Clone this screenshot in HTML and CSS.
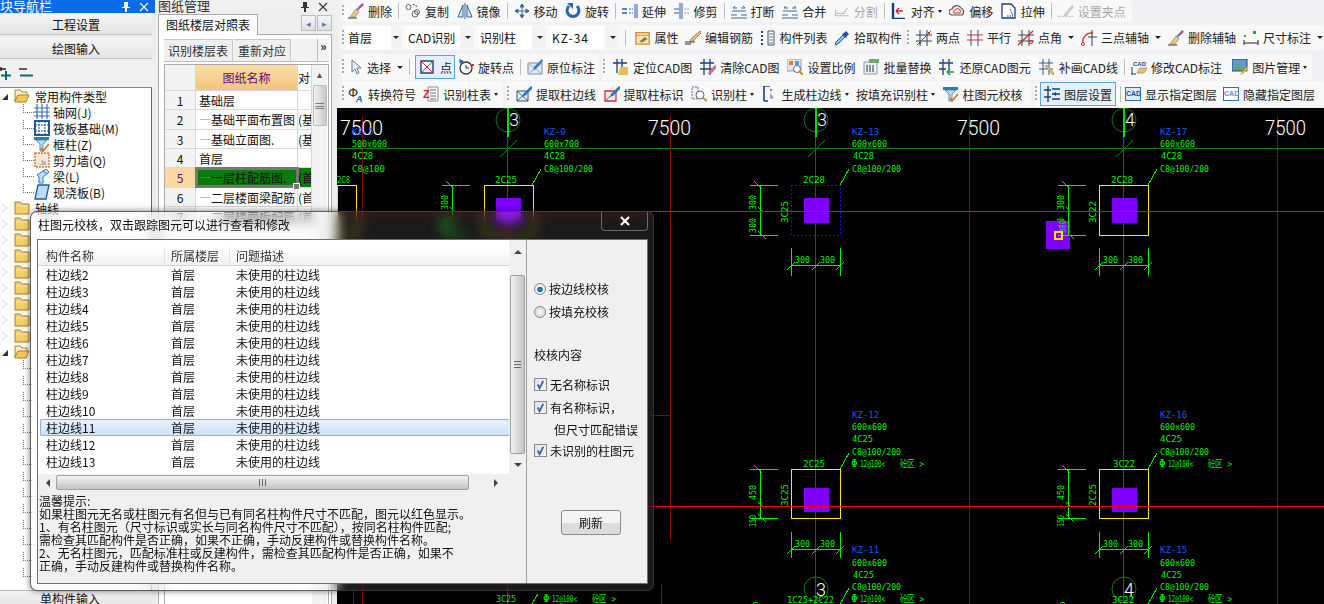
FILE: index.html
```html
<!DOCTYPE html>
<html lang="zh-CN">
<head>
    <meta charset="UTF-8">
    <title>柱图元校核</title>
    <link rel="stylesheet" href="styles.css">
</head>
<body>
    <svg class="sprite" aria-hidden="true">
        <symbol id="i-broom" viewBox="0 0 16 16"><path d="M0 15h9" stroke="#333"/><path d="M15 1L8 8" stroke="#6b7fb8" stroke-width="2.4"/><path d="M8 6l3 3-4 5H2z" fill="#e4c98e" stroke="#8a7444" stroke-width=".6"/><path d="M15 1l-3 3" stroke="#c04a7a" stroke-width="2"/></symbol>
        <symbol id="i-copy" viewBox="0 0 16 16"><g fill="none" stroke="#666"><circle cx="3.5" cy="4" r="2.5"/><circle cx="10" cy="11" r="3"/><circle cx="12" cy="9" r="2.5"/></g><path d="M8 1l5 3" stroke="#345" stroke-dasharray="2 1"/></symbol>
        <symbol id="i-mirror" viewBox="0 0 16 16"><path d="M6 2v12H1zM10 2v12h5z" fill="#dbe6f5" stroke="#33629c"/><path d="M8 0v16" stroke="#33629c"/></symbol>
        <symbol id="i-move" viewBox="0 0 16 16"><path d="M8 1v14M1 8h14M8 1L6 4h4zM8 15l-2-3h4zM1 8l3-2v4zM15 8l-3-2v4z" stroke="#3a6a9e" fill="#3a6a9e"/></symbol>
        <symbol id="i-rotate" viewBox="0 0 16 16"><path d="M4 3a6 6 0 1 0 8 0" fill="none" stroke="#2a62b8" stroke-width="3"/><path d="M2 0h6v6z" fill="#2a62b8"/></symbol>
        <symbol id="i-extend" viewBox="0 0 16 16"><path d="M13 1v14M15 1v14" stroke="#2a5ea8"/><path d="M0 6h5M0 10h5" stroke="#2a5ea8" stroke-width="1.4"/><path d="M7 6h4M7 10h4" stroke="#2a5ea8" stroke-dasharray="2 1"/></symbol>
        <symbol id="i-trim" viewBox="0 0 16 16"><path d="M6 0v16M8 0v16" stroke="#2a5ea8"/><path d="M0 6h5M0 10h5" stroke="#2a5ea8"/><path d="M10 6h6M10 10h6" stroke="#8aa" stroke-dasharray="2 1"/></symbol>
        <symbol id="i-break" viewBox="0 0 16 16"><path d="M0 12h6M10 12h6M0 15h16" stroke="#3a6a9e" stroke-width="1.2"/><path d="M2 5h4M2 5l2-2M14 5h-4M14 5l-2-2M1 8h14" stroke="#3a6a9e"/></symbol>
        <symbol id="i-split" viewBox="0 0 20 16"><path d="M1 14h17M2 11h10l5-7M2 14V6" fill="none" stroke="#bbb" stroke-width="1.3"/></symbol>
        <symbol id="i-align" viewBox="0 0 16 16"><path d="M2 0v16h12" fill="none" stroke="#123f86" stroke-width="2.4"/><path d="M12 8H5M5 8l3-3M5 8l3 3" fill="none" stroke="#d22" stroke-width="1.4"/></symbol>
        <symbol id="i-offset" viewBox="0 0 16 16"><path d="M3 12a3 3 0 0 1 0-6 5 5 0 0 1 9-1 4 4 0 0 1 1 7z" fill="#f7e9e4" stroke="#555" stroke-width="1.2"/><path d="M5 10a2 2 0 0 1 1-3 3 3 0 0 1 5 0 2 2 0 0 1 0 3z" fill="none" stroke="#d33"/></symbol>
        <symbol id="i-stretch" viewBox="0 0 16 16"><path d="M1 1h9l4 4v10H1z" fill="#fff" stroke="#1d3f7c" stroke-width="1.3"/><path d="M9 6l3 7M6 13h6" stroke="#1d3f7c" stroke-dasharray="1.5 1"/></symbol>
        <symbol id="i-grip" viewBox="0 0 18 16"><path d="M0 14h18" stroke="#bbb" stroke-dasharray="3 1"/><path d="M16 1l-6 7 2 2 6-6z" fill="#ccc"/><path d="M9 9l3 2-2 2H7z" fill="#ddd" stroke="#bbb"/></symbol>
        <symbol id="i-prop" viewBox="0 0 18 16"><path d="M1 2h15v13H1z" fill="#f6e6b8" stroke="#d88a2a" stroke-width="1.4"/><path d="M1 5h15" stroke="#d88a2a"/><path d="M5 12l6-5 3 2-6 4z" fill="#8a7444"/></symbol>
        <symbol id="i-rebar" viewBox="0 0 16 16"><path d="M0 12h10M0 14h6" stroke="#333"/><path d="M15 1l-9 8-1 3 3-1 8-8z" fill="#e7c27a" stroke="#7a5a20" stroke-width=".7"/></symbol>
        <symbol id="i-list" viewBox="0 0 16 16"><path d="M8 1h6v14H8z" fill="#fff" stroke="#456"/><path d="M9 4h4M9 7h4M9 10h4M9 13h4" stroke="#678"/><path d="M1 2h3M1 6h3M1 10h3M1 14h3" stroke="#345" stroke-width="2" stroke-dasharray="2 1"/></symbol>
        <symbol id="i-pick" viewBox="0 0 16 16"><path d="M9 5l2 2-7 7-3 1 1-3z" fill="#8ec1ee" stroke="#2a62a8"/><path d="M8 4l4 4 1-2 2-2-3-3-2 2z" fill="#1f56a6"/></symbol>
        <symbol id="i-2pt" viewBox="0 0 16 16"><path d="M4 0v16M11 0v16M0 5h16M0 11h16" stroke="#345"/><path d="M1 15L15 1" stroke="#2a7a2a"/><path d="M3 12h2v2H3zM12 2h2v2h-2z" fill="#d22"/></symbol>
        <symbol id="i-para" viewBox="0 0 16 16"><path d="M4 0v16M11 0v16" stroke="#33558c"/><path d="M0 5h16M0 10h16" stroke="#c33"/></symbol>
        <symbol id="i-angle" viewBox="0 0 16 16"><path d="M4 0v16M11 0v16M0 5h16M0 11h16" stroke="#345"/><path d="M0 15L15 1" stroke="#d22" stroke-width="1.3"/><circle cx="13" cy="12" r="1.6" fill="none" stroke="#d22"/></symbol>
        <symbol id="i-arc" viewBox="0 0 16 16"><path d="M2 14A9 9 0 0 1 12 3" fill="none" stroke="#d22" stroke-width="1.3"/><path d="M11 0v16M7 7h9" stroke="#345"/><circle cx="2" cy="14" r="1.5" fill="#fff" stroke="#d22"/></symbol>
        <symbol id="i-dim" viewBox="0 0 16 16"><path d="M1 10v5M15 10v5M1 13h14" stroke="#222"/><path d="M1 5h2v2H1zM10 1h3v3h-3z" fill="#2aa52a"/></symbol>
        <symbol id="i-cursor" viewBox="0 0 16 16"><path d="M5 1v12l3-3 2 5 2-1-2-5h4z" fill="#eef2fa" stroke="#66748e"/></symbol>
        <symbol id="i-point" viewBox="0 0 16 16"><path d="M2 2h12v12H2z" fill="#fff" stroke="#1d3f7c" stroke-width="1.4"/><path d="M2 2l12 12M14 2L2 14" stroke="#d22"/></symbol>
        <symbol id="i-rotpt" viewBox="0 0 16 16"><circle cx="8" cy="9" r="6" fill="none" stroke="#333" stroke-width="1.3"/><path d="M8 9V6M8 9h3" stroke="#333"/><path d="M1 0l5 2-4 3z" fill="#2a62b8"/><circle cx="15" cy="6" r="1.2" fill="#d22"/></symbol>
        <symbol id="i-mark" viewBox="0 0 16 16"><path d="M1 4h14v11H1z" fill="#dfe8f4" stroke="#7b8fa8"/><path d="M1 4l14 11M15 4L1 15" stroke="#a5b5c8"/><path d="M15 0L7 8l-1 3 3-1 7-8z" fill="#3a78c8"/></symbol>
        <symbol id="i-locate" viewBox="0 0 16 16"><path d="M4 0v14M9 0v14M0 4h14" stroke="#1d3f7c" stroke-width="1.3"/><path d="M7 8h8v8H5z" fill="#e8bc5a"/></symbol>
        <symbol id="i-clear" viewBox="0 0 16 16"><path d="M4 0v16M10 0v16M0 4h14M0 10h14" stroke="#1d3f7c" stroke-width="1.3"/><path d="M15 6l-6 6-1 3 4-1 5-6z" fill="#d36a8a"/></symbol>
        <symbol id="i-scale" viewBox="0 0 16 16"><path d="M0 0h14v12H0z" fill="#dfe9f6" stroke="#8aa2c0"/><path d="M2 2h4v4H2z" fill="#e67a3a"/><path d="M8 2h4v4H8z" fill="#5a9ad6"/><circle cx="10" cy="10" r="3.5" fill="#fff" stroke="#667"/><path d="M12 12l4 4" stroke="#c09030" stroke-width="2"/></symbol>
        <symbol id="i-batch" viewBox="0 0 16 16"><path d="M1 3h13v12H1z" fill="#eef0f3" stroke="#8b97a6"/><path d="M4 6v7M7 6v7M10 6v7" stroke="#456" stroke-width="1.2"/><path d="M6 0h10v4H6z" fill="#6ea86e"/></symbol>
        <symbol id="i-restore" viewBox="0 0 16 16"><path d="M4 0v16M10 0v12M0 4h14M0 10h7" stroke="#1d3f7c" stroke-width="1.3"/><path d="M15 13H8M8 13l3-3M8 13l3 3" fill="none" stroke="#2a9a3a" stroke-width="1.6"/></symbol>
        <symbol id="i-draw" viewBox="0 0 16 16"><path d="M4 0v16M10 0v16M0 4h14M0 10h14" stroke="#345a8c"/><path d="M6 7l2-1 7 8-1 2z" fill="#e7c27a" stroke="#8a7444" stroke-width=".6"/></symbol>
        <symbol id="i-pic" viewBox="0 0 16 16"><path d="M0 0h15v12H0z" fill="#5d9bd8" stroke="#345"/><path d="M1 11l5-6 4 4 2-2 2 4z" fill="#6aa84f"/><path d="M16 7l-7 7-1 2 3-1 7-7z" fill="#e7b23a"/></symbol>
        <symbol id="i-ztable" viewBox="0 0 16 16"><path d="M5 1h10v14H5z" fill="#fff" stroke="#889"/><path d="M7 4h6M7 7h6M7 10h6M7 13h6" stroke="#667"/></symbol>
        <symbol id="i-extract" viewBox="0 0 16 16"><path d="M1 5h11v10H1z" fill="#e9eff7" stroke="#2a4f88"/><path d="M1 5l11 10M12 5L1 15" stroke="#2a7a3a"/><path d="M15 0l-8 8-1 3 3-1 8-8z" fill="#2a78c8"/></symbol>
        <symbol id="i-extred" viewBox="0 0 16 16"><path d="M1 5h11v10H1z" fill="#f7e9e9" stroke="#c33" stroke-width="1.3"/><path d="M1 15L12 5" stroke="#2a7a3a"/><path d="M15 0l-8 8-1 3 3-1 8-8z" fill="#2a78c8"/></symbol>
        <symbol id="i-recog" viewBox="0 0 16 16"><path d="M1 1h6v12H1z" fill="#eef1f5" stroke="#678" stroke-dasharray="2 1"/><circle cx="9" cy="9" r="4" fill="#fff" stroke="#667"/><path d="M12 12l4 3" stroke="#c09030" stroke-width="2"/></symbol>
        <symbol id="i-gen" viewBox="0 0 16 16"><path d="M2 0v15M2 0h6M2 15h4" fill="none" stroke="#1d3f7c" stroke-width="1.6"/><path d="M8 7l4 5-3 1-1-1z" fill="#8aa8c8"/><circle cx="9" cy="4" r="1" fill="#d22"/></symbol>
        <symbol id="i-column" viewBox="0 0 16 16"><path d="M0 1h15v3H0z" fill="#2d7ac0"/><path d="M2 4h11L9 8v7H6V8z" fill="#bcdcf4" stroke="#2d7ac0" stroke-width=".8"/><path d="M7 12l2 3 6-7" fill="none" stroke="#d8742a" stroke-width="1.8"/></symbol>
        <symbol id="i-layer" viewBox="0 0 16 16"><path d="M4 0v16M0 4h7M0 11h7" stroke="#123f86" stroke-width="1.4"/><path d="M8 3h8M8 8h8M8 13h8" stroke="#123f86" stroke-width="1.3"/><path d="M9 8l3-2v4z" fill="#123f86"/></symbol>
        <symbol id="i-wall" viewBox="0 0 16 16"><path d="M1 1h14v14H1z" fill="#f3e7dc" stroke="#d8742a" stroke-dasharray="2 1" stroke-width="1.4"/><path d="M4 13l8-3v3zM7 8l5 2-4 1z" fill="#b5a99c"/></symbol>
        <symbol id="i-beam" viewBox="0 0 16 16"><path d="M3 7l9-6 3 3-6 5v6H5V9z" fill="#bcdcf4" stroke="#2d7ac0"/><path d="M9 3l4 3" stroke="#2d7ac0"/></symbol>
        <symbol id="i-slab" viewBox="0 0 16 16"><path d="M4 1h11l-3 14H1z" fill="#bcdcf4" stroke="#1d5aa0" stroke-width="1.3"/></symbol>
        <symbol id="i-net" viewBox="0 0 16 16"><path d="M3 0v15M8 0v15M13 0v15M0 4h16M0 8h16M0 12h16" stroke="#3d6eb4" stroke-width="1.2"/></symbol>
        <symbol id="i-raft" viewBox="0 0 16 16"><path d="M1 1h14v14H1z" fill="#fff" stroke="#1d5aa0" stroke-width="2"/><path d="M5 1v14M11 1v14M1 5h14M1 11h14" stroke="#1d5aa0" stroke-dasharray="2 1"/></symbol>
        <symbol id="i-folder" viewBox="0 0 16 14"><path d="M1 3V1h5l2 2h7v10H1z" fill="#f4cf6a" stroke="#a3802c"/><path d="M2 5h12" stroke="#fbeeb8"/></symbol>
        <symbol id="i-open" viewBox="0 0 16 14"><path d="M1 12V1h5l2 2h5v3" fill="#fff2c4" stroke="#a3802c"/><path d="M1 12l3-6h11l-3 7H1z" fill="#f4c95a" stroke="#a3802c"/></symbol>
        <symbol id="i-pin" viewBox="0 0 10 10"><path d="M3 0h4v5h2v1H6v4H4V6H1V5h2z" fill="currentColor"/></symbol>
        <symbol id="i-x" viewBox="0 0 10 10"><path d="M1 1l8 8M9 1L1 9" stroke="currentColor" stroke-width="1.1"/></symbol>
        <symbol id="i-check" viewBox="0 0 12 12"><path d="M3 6l2 4 4-8" fill="none" stroke="#3f5ea8" stroke-width="2"/></symbol>
    </svg>

    <div class="app">
        <aside class="nav-panel">
            <div class="dock-title dock-title-active">
                <span>块导航栏</span>
                <svg class="dock-ic"><use href="#i-pin"/></svg>
                <svg class="dock-ic"><use href="#i-x"/></svg>
            </div>
            <div class="nav-btn">工程设置</div>
            <div class="nav-btn">绘图输入</div>
            <div class="tree-tools">
                <svg class="expand-ic" viewBox="0 0 34 13"><path d="M0 2h6M1 0v4" stroke="#222" stroke-width="1.4"/><path d="M1 8.500h10M6 4v9" stroke="#0c6a6a" stroke-width="2"/><path d="M19 2h8" stroke="#222" stroke-width="1.4"/><path d="M20 8.500h13" stroke="#0c6a6a" stroke-width="2"/></svg>
            </div>
            <ul class="tree">
                <li class="node"><i class="tw tw-open"></i><svg class="folder"><use href="#i-open"/></svg><span>常用构件类型</span></li>
                <li class="leaf"><svg class="ic"><use href="#i-net"/></svg><span>轴网(J)</span></li>
                <li class="leaf"><svg class="ic"><use href="#i-raft"/></svg><span>筏板基础(M)</span></li>
                <li class="leaf"><svg class="ic"><use href="#i-column"/></svg><span>框柱(Z)</span></li>
                <li class="leaf"><svg class="ic"><use href="#i-wall"/></svg><span>剪力墙(Q)</span></li>
                <li class="leaf"><svg class="ic"><use href="#i-beam"/></svg><span>梁(L)</span></li>
                <li class="leaf"><svg class="ic"><use href="#i-slab"/></svg><span>现浇板(B)</span></li>
                <li class="node"><i class="tw"></i><svg class="folder"><use href="#i-folder"/></svg><span>轴线</span></li>
                <li class="node"><i class="tw"></i><svg class="folder"><use href="#i-folder"/></svg></li>
                <li class="node"><i class="tw"></i><svg class="folder"><use href="#i-folder"/></svg></li>
                <li class="node"><i class="tw"></i><svg class="folder"><use href="#i-folder"/></svg></li>
                <li class="node"><i class="tw"></i><svg class="folder"><use href="#i-folder"/></svg></li>
                <li class="node"><i class="tw"></i><svg class="folder"><use href="#i-folder"/></svg></li>
                <li class="node"><i class="tw"></i><svg class="folder"><use href="#i-folder"/></svg></li>
                <li class="node"><i class="tw"></i><svg class="folder"><use href="#i-folder"/></svg></li>
                <li class="node"><i class="tw"></i><svg class="folder"><use href="#i-folder"/></svg></li>
                <li class="node"><i class="tw tw-open"></i><svg class="folder"><use href="#i-open"/></svg></li>
                <li class="leaf"></li><li class="leaf"></li><li class="leaf"></li><li class="leaf"></li>
                <li class="leaf"></li><li class="leaf"></li><li class="leaf"></li><li class="leaf"></li>
                <li class="leaf"></li><li class="leaf"></li><li class="leaf"></li><li class="leaf"></li>
                <li class="leaf"></li><li class="leaf"></li>
            </ul>
            <div class="nav-foot">单构件输入</div>
        </aside>

        <aside class="drawing-panel">
            <div class="dock-title">
                <span>图纸管理</span>
                <svg class="dock-ic"><use href="#i-pin"/></svg>
                <svg class="dock-ic"><use href="#i-x"/></svg>
            </div>
            <div class="tab-strip">
                <div class="tab">图纸楼层对照表</div>
                <div class="tab-arrows"><span class="tab-arrow">◂</span><span class="tab-arrow">▸</span></div>
            </div>
            <div class="tab-body">
                <div class="sheet-tools">
                    <span class="sheet-btn">识别楼层表</span>
                    <span class="sheet-btn">重新对应</span>
                    <span class="sheet-more">»</span>
                </div>
                <div class="sheet">
                    <div class="sheet-grid">
                        <div class="row row-head"><span class="num"></span><span class="name">图纸名称</span><span class="extra">对</span></div>
                        <div class="row"><span class="num">1</span><span class="cell">基础层</span><span class="extra"></span></div>
                        <div class="row"><span class="num">2</span><span class="cell"><i>—</i>基础平面布置图</span><span class="extra">(基</span></div>
                        <div class="row"><span class="num">3</span><span class="cell"><i>—</i>基础立面图.</span><span class="extra">(基</span></div>
                        <div class="row"><span class="num">4</span><span class="cell">首层</span><span class="extra"></span></div>
                        <div class="row row-on"><span class="num">5</span><span class="cell"><i>—</i>一层柱配筋图.</span><span class="extra">(首</span></div>
                        <div class="row"><span class="num">6</span><span class="cell"><i>—</i>二层楼面梁配筋</span><span class="extra">(首</span></div>
                        <div class="row"><span class="num">7</span><span class="cell"><i>—</i>二层楼面板配筋</span><span class="extra">(首</span></div>
                    </div>
                    <div class="sheet-scroll"><span class="sheet-up">▴</span><span class="sheet-thumb">≡</span></div>
                </div>
            </div>
        </aside>

        <main class="work">
            <div class="toolbars">
                <div class="bar bar-1">
                    <div class="grp grp-plain">
                        <span class="tool"><svg class="ic"><use href="#i-broom"/></svg>删除</span><span class="sep"></span>
                        <span class="tool"><svg class="ic"><use href="#i-copy"/></svg>复制</span>
                        <span class="tool"><svg class="ic"><use href="#i-mirror"/></svg>镜像</span><span class="sep"></span>
                        <span class="tool"><svg class="ic"><use href="#i-move"/></svg>移动</span>
                        <span class="tool"><svg class="ic"><use href="#i-rotate"/></svg>旋转</span><span class="sep"></span>
                        <span class="tool"><svg class="ic"><use href="#i-extend"/></svg>延伸</span>
                        <span class="tool"><svg class="ic"><use href="#i-trim"/></svg>修剪</span><span class="sep"></span>
                        <span class="tool"><svg class="ic"><use href="#i-break"/></svg>打断</span>
                        <span class="tool"><svg class="ic"><use href="#i-break"/></svg>合并</span>
                        <span class="tool tool-off"><svg class="ic"><use href="#i-split"/></svg>分割</span><span class="sep"></span>
                        <span class="tool"><svg class="ic"><use href="#i-align"/></svg>对齐<em class="caret caret-near"></em></span>
                        <span class="tool"><svg class="ic"><use href="#i-offset"/></svg>偏移</span>
                        <span class="tool"><svg class="ic"><use href="#i-stretch"/></svg>拉伸</span><span class="sep"></span>
                        <span class="tool tool-off"><svg class="ic"><use href="#i-grip"/></svg>设置夹点</span>
                    </div>
                </div>
                <div class="bar bar-2">
                    <div class="grp grp-a">
                        <span class="combo combo-s">首层</span>
                        <span class="combo">CAD识别</span>
                        <span class="combo">识别柱</span>
                        <span class="combo combo-kz">KZ-34</span>
                        <span class="sep sep-c"></span>
                        <span class="tool"><svg class="ic"><use href="#i-prop"/></svg>属性</span>
                        <span class="tool"><svg class="ic"><use href="#i-rebar"/></svg>编辑钢筋</span>
                        <span class="tool"><svg class="ic"><use href="#i-list"/></svg>构件列表</span>
                        <span class="tool"><svg class="ic"><use href="#i-pick"/></svg>拾取构件</span>
                    </div>
                    <div class="grp grp-axis">
                        <span class="tool"><svg class="ic"><use href="#i-2pt"/></svg>两点</span>
                        <span class="tool"><svg class="ic"><use href="#i-para"/></svg>平行</span>
                        <span class="tool"><svg class="ic"><use href="#i-angle"/></svg>点角<em class="caret"></em></span>
                        <span class="tool"><svg class="ic"><use href="#i-arc"/></svg>三点辅轴<em class="caret"></em></span>
                        <span class="tool"><svg class="ic"><use href="#i-broom"/></svg>删除辅轴</span>
                        <span class="tool"><svg class="ic"><use href="#i-dim"/></svg>尺寸标注<em class="caret"></em></span>
                    </div>
                </div>
                <div class="bar bar-3">
                    <div class="grp grp-pick">
                        <span class="tool"><svg class="ic"><use href="#i-cursor"/></svg>选择<em class="caret"></em></span><span class="sep"></span>
                        <span class="tool tool-on tool-point"><svg class="ic"><use href="#i-point"/></svg>点</span>
                        <span class="tool tool-rot"><svg class="ic"><use href="#i-rotpt"/></svg>旋转点</span><span class="sep"></span>
                        <span class="tool"><svg class="ic"><use href="#i-mark"/></svg>原位标注</span>
                    </div>
                    <div class="grp grp-cad">
                        <span class="tool"><svg class="ic"><use href="#i-locate"/></svg>定位CAD图</span>
                        <span class="tool"><svg class="ic"><use href="#i-clear"/></svg>清除CAD图</span>
                        <span class="tool"><svg class="ic"><use href="#i-scale"/></svg>设置比例</span>
                        <span class="tool"><svg class="ic"><use href="#i-batch"/></svg>批量替换</span>
                        <span class="tool"><svg class="ic"><use href="#i-restore"/></svg>还原CAD图元</span>
                        <span class="tool"><svg class="ic"><use href="#i-draw"/></svg>补画CAD线</span><span class="sep"></span>
                        <span class="tool"><svg class="ic" viewBox="0 0 16 16"><text class="ic-text" x="2" y="7">CAD</text><path d="M1 8v7M0 15h5" stroke="#123f86"/><path d="M6 14l3-5h7l-3 5z" fill="#e7c27a" stroke="#8a7444" stroke-width=".6"/></svg>修改CAD标注</span>
                        <span class="tool tool-pic"><svg class="ic"><use href="#i-pic"/></svg>图片管理<em class="caret caret-near"></em></span>
                    </div>
                </div>
                <div class="bar bar-4">
                    <div class="grp grp-sym">
                        <span class="tool"><svg class="ic" viewBox="0 0 16 16"><text class="ic-phi" x="0" y="11">Φ</text><text class="ic-a" x="8" y="16">A</text></svg>转换符号</span>
                        <span class="tool"><svg class="ic" viewBox="0 0 16 16"><use href="#i-ztable"/><text class="ic-z" x="0" y="12">Z</text></svg>识别柱表<em class="caret caret-near"></em></span>
                    </div>
                    <div class="grp grp-col">
                        <span class="tool"><svg class="ic"><use href="#i-extract"/></svg>提取柱边线</span>
                        <span class="tool"><svg class="ic"><use href="#i-extred"/></svg>提取柱标识</span>
                        <span class="tool"><svg class="ic"><use href="#i-recog"/></svg>识别柱<em class="caret caret-near"></em></span>
                        <span class="tool"><svg class="ic"><use href="#i-gen"/></svg>生成柱边线<em class="caret caret-near"></em></span>
                        <span class="tool">按填充识别柱<em class="caret caret-near"></em></span>
                        <span class="tool"><svg class="ic"><use href="#i-column"/></svg>柱图元校核</span>
                    </div>
                    <div class="grp grp-layer">
                        <span class="tool tool-on tool-layer"><svg class="ic"><use href="#i-layer"/></svg>图层设置</span><span class="sep"></span>
                        <span class="tool"><span class="cad-ic">CAD</span>显示指定图层</span>
                        <span class="tool"><span class="cad-ic cad-ic-off">CAD</span>隐藏指定图层</span>
                    </div>
                </div>
            </div>

            <svg class="canvas" viewBox="337 108 987 496">
                <defs>
                    <g id="top-col">
                        <path class="solid" d="M-12 198h25v25h-25z"/>
                        <path class="gl" d="M-66 185h28M-66 235h28M-56 185v50M-25 248v28M24 248v28M-25 265h49M-62 181l8 8M-58 207l5 5M-58 231l8 8M-29 270l8-8M-4 270l8-8M20 270l8-8M24 185l9-16"/>
                        <text class="ct" transform="translate(-60 210) rotate(-90)" textLength="15" lengthAdjust="spacingAndGlyphs">300</text>
                        <text class="ct" transform="translate(-60 233) rotate(-90)" textLength="15" lengthAdjust="spacingAndGlyphs">300</text>
                        <text class="ct" x="-21" y="263" textLength="15" lengthAdjust="spacingAndGlyphs">300</text>
                        <text class="ct" x="4" y="263" textLength="15" lengthAdjust="spacingAndGlyphs">300</text>
                    </g>
                    <g id="low-col">
                        <path class="solid" d="M-12 488h25v24h-25z"/>
                        <path class="yl" d="M-25 469h49v49h-49z"/>
                        <path class="gl" d="M-66 469h28M-66 518h28M-56 469v49M-25 532v26M24 532v26M-25 549h49M-62 465l8 8M-58 502l5 5M-58 514l8 8M-29 554l8-8M-4 554l8-8M20 554l8-8M24 469l9-16"/>
                        <text class="ct" transform="translate(-60 500) rotate(-90)" textLength="15" lengthAdjust="spacingAndGlyphs">450</text>
                        <text class="ct" transform="translate(-60 527) rotate(-90)" textLength="12" lengthAdjust="spacingAndGlyphs">150</text>
                        <text class="ct" x="-21" y="547" textLength="15" lengthAdjust="spacingAndGlyphs">300</text>
                        <text class="ct" x="4" y="547" textLength="15" lengthAdjust="spacingAndGlyphs">300</text>
                    </g>
                    <g id="stirrup">
                        <text class="ct ct-big" x="0" y="0">Φ</text>
                        <text class="ct" x="9" y="0" textLength="25" lengthAdjust="spacingAndGlyphs">12@100&lt;</text>
                        <text class="ct" x="49" y="0" textLength="24" lengthAdjust="spacingAndGlyphs">砼区 &gt;</text>
                    </g>
                    <g id="axis">
                        <circle class="axis" cx="0" cy="120" r="12"/>
                        <path class="gl-fat" d="M0 108v29"/>
                        <path class="dg" d="M-8 157L9 140"/>
                    </g>
                </defs>

                <path class="dr" d="M362 116V604M670 116V541M969 116V604M1277 116V604M661 584V604M353 585V604M650 415H670"/>
                <path class="dgl" d="M337 148H1324"/>
                <path class="rd-v" d="M507 137V604M815 137V604M1123 137V604"/>

                <text class="big" x="340" y="135" textLength="43" lengthAdjust="spacingAndGlyphs">7500</text>
                <text class="big" x="648" y="135" textLength="43" lengthAdjust="spacingAndGlyphs">7500</text>
                <text class="big" x="957" y="135" textLength="43" lengthAdjust="spacingAndGlyphs">7500</text>
                <text class="big" x="1265" y="135" textLength="41" lengthAdjust="spacingAndGlyphs">7500</text>

                <use href="#axis" x="508"/><use href="#axis" x="816"/><use href="#axis" x="1124"/>
                <text class="wt" x="509" y="126">3</text><text class="wt" x="817" y="126">3</text><text class="wt" x="1125" y="126">4</text>

                <path class="yl" d="M337 185h19v50h-19z"/>
                <text class="bl" x="352" y="135">KZ-5</text>
                <text class="ct" x="352" y="147" textLength="35" lengthAdjust="spacingAndGlyphs">500x600</text>
                <text class="ct" x="352" y="159" textLength="21" lengthAdjust="spacingAndGlyphs">4C28</text>
                <text class="ct" x="352" y="172" textLength="33" lengthAdjust="spacingAndGlyphs">C8@100</text>
                <text class="ct" x="337" y="183" textLength="13" lengthAdjust="spacingAndGlyphs">2C8</text>

                <use href="#top-col" x="508"/>
                <path class="yl" d="M484 185h49v50h-49z"/>
                <text class="bl" x="544" y="135">KZ-9</text>
                <text class="ct" x="544" y="147" textLength="35" lengthAdjust="spacingAndGlyphs">600x700</text>
                <text class="ct" x="544" y="159" textLength="21" lengthAdjust="spacingAndGlyphs">4C28</text>
                <text class="ct" x="544" y="172" textLength="49" lengthAdjust="spacingAndGlyphs">C8@100/200</text>
                <text class="ct" x="495" y="183" textLength="22" lengthAdjust="spacingAndGlyphs">2C25</text>

                <use href="#top-col" x="816"/>
                <path class="bd" d="M791 185h49v50h-49z"/>
                <text class="bl" x="852" y="135">KZ-13</text>
                <text class="ct" x="852" y="147" textLength="35" lengthAdjust="spacingAndGlyphs">600x600</text>
                <text class="ct" x="853" y="159" textLength="21" lengthAdjust="spacingAndGlyphs">4C28</text>
                <text class="ct" x="852" y="172" textLength="49" lengthAdjust="spacingAndGlyphs">C8@100/200</text>
                <text class="ct" x="803" y="183" textLength="22" lengthAdjust="spacingAndGlyphs">2C28</text>
                <text class="ct" transform="translate(788 223) rotate(-90)" textLength="22" lengthAdjust="spacingAndGlyphs">3C25</text>

                <use href="#top-col" x="1124"/>
                <path class="yl" d="M1099 185h49v50h-49z"/>
                <text class="bl" x="1160" y="135">KZ-17</text>
                <text class="ct" x="1160" y="147" textLength="35" lengthAdjust="spacingAndGlyphs">600x600</text>
                <text class="ct" x="1161" y="159" textLength="21" lengthAdjust="spacingAndGlyphs">4C28</text>
                <text class="ct" x="1160" y="172" textLength="49" lengthAdjust="spacingAndGlyphs">C8@100/200</text>
                <text class="ct" x="1111" y="183" textLength="22" lengthAdjust="spacingAndGlyphs">2C28</text>
                <text class="ct" transform="translate(1096 223) rotate(-90)" textLength="22" lengthAdjust="spacingAndGlyphs">3C22</text>
                <path class="solid" d="M1046 221h24v28h-24z"/>
                <path class="gl" d="M1068 221v14h-10"/>
                <text class="ct" transform="translate(1066 233) rotate(-90)" textLength="13" lengthAdjust="spacingAndGlyphs">300</text>
                <path class="yl-fat" d="M1055 232h7v7h-7z"/>

                <use href="#low-col" x="508"/><use href="#low-col" x="816"/><use href="#low-col" x="1124"/>
                <text class="bl" x="852" y="418">KZ-12</text>
                <text class="ct" x="852" y="430" textLength="35" lengthAdjust="spacingAndGlyphs">600x600</text>
                <text class="ct" x="852" y="442" textLength="21" lengthAdjust="spacingAndGlyphs">4C25</text>
                <text class="ct" x="852" y="455" textLength="49" lengthAdjust="spacingAndGlyphs">C8@100/200</text>
                <use href="#stirrup" x="851" y="467"/>
                <text class="ct" x="803" y="467" textLength="22" lengthAdjust="spacingAndGlyphs">2C25</text>
                <text class="ct" transform="translate(788 506) rotate(-90)" textLength="22" lengthAdjust="spacingAndGlyphs">3C25</text>

                <text class="bl" x="1160" y="418">KZ-16</text>
                <text class="ct" x="1160" y="430" textLength="35" lengthAdjust="spacingAndGlyphs">600x600</text>
                <text class="ct" x="1160" y="442" textLength="22" lengthAdjust="spacingAndGlyphs">4C25</text>
                <text class="ct" x="1160" y="455" textLength="49" lengthAdjust="spacingAndGlyphs">C8@100/200</text>
                <use href="#stirrup" x="1159" y="467"/>
                <text class="ct" x="1113" y="467" textLength="22" lengthAdjust="spacingAndGlyphs">3C22</text>
                <text class="ct" transform="translate(1096 506) rotate(-90)" textLength="22" lengthAdjust="spacingAndGlyphs">2C25</text>

                <text class="bl" x="852" y="553">KZ-11</text>
                <text class="ct" x="852" y="566" textLength="35" lengthAdjust="spacingAndGlyphs">600x600</text>
                <text class="ct" x="853" y="578" textLength="21" lengthAdjust="spacingAndGlyphs">4C25</text>
                <text class="ct" x="852" y="590" textLength="49" lengthAdjust="spacingAndGlyphs">C8@100/200</text>
                <use href="#stirrup" x="851" y="602"/>
                <path class="gl" d="M840 604l9-16M1148 604l9-16"/>
                <circle class="axis" cx="816" cy="589" r="12"/>
                <text class="wt" x="816" y="596">3</text>
                <text class="ct" x="787" y="603" textLength="47" lengthAdjust="spacingAndGlyphs">1C25+2C22</text>

                <text class="bl" x="1160" y="553">KZ-15</text>
                <text class="ct" x="1160" y="566" textLength="35" lengthAdjust="spacingAndGlyphs">600x600</text>
                <text class="ct" x="1161" y="578" textLength="21" lengthAdjust="spacingAndGlyphs">4C25</text>
                <text class="ct" x="1160" y="590" textLength="49" lengthAdjust="spacingAndGlyphs">C8@100/200</text>
                <use href="#stirrup" x="1159" y="602"/>
                <circle class="axis" cx="1124" cy="589" r="12"/>
                <text class="wt" x="1124" y="596">4</text>
                <text class="ct" x="1112" y="603" textLength="22" lengthAdjust="spacingAndGlyphs">3C22</text>

                <text class="ct" x="496" y="602" textLength="20" lengthAdjust="spacingAndGlyphs">3C25</text>
                <use href="#stirrup" x="543" y="602"/>
                <path class="gl" d="M532 604l6-10M753 604a3 3 0 0 1 5 0M1060 604a3 3 0 0 1 5 0"/>

                <path class="rd" d="M337 211H1324M337 506H1324"/>
            </svg>
        </main>
    </div>

    <section class="dialog">
        <header class="dlg-title">
            <span>柱图元校核，双击跟踪图元可以进行查看和修改</span>
            <span class="dlg-close"><svg viewBox="0 0 10 10"><path d="M1 1l8 8M9 1L1 9" stroke="#fff" stroke-width="2.2"/></svg></span>
        </header>
        <div class="dlg-body">
            <div class="dlg-main">
                <div class="list-wrap">
                    <div class="list">
                        <div class="list-head"><span>构件名称</span><span>所属楼层</span><span>问题描述</span></div>
                        <div class="list-row"><span>柱边线2</span><span>首层</span><span>未使用的柱边线</span></div>
                        <div class="list-row"><span>柱边线3</span><span>首层</span><span>未使用的柱边线</span></div>
                        <div class="list-row"><span>柱边线4</span><span>首层</span><span>未使用的柱边线</span></div>
                        <div class="list-row"><span>柱边线5</span><span>首层</span><span>未使用的柱边线</span></div>
                        <div class="list-row"><span>柱边线6</span><span>首层</span><span>未使用的柱边线</span></div>
                        <div class="list-row"><span>柱边线7</span><span>首层</span><span>未使用的柱边线</span></div>
                        <div class="list-row"><span>柱边线8</span><span>首层</span><span>未使用的柱边线</span></div>
                        <div class="list-row"><span>柱边线9</span><span>首层</span><span>未使用的柱边线</span></div>
                        <div class="list-row"><span>柱边线10</span><span>首层</span><span>未使用的柱边线</span></div>
                        <div class="list-row list-row-on"><span>柱边线11</span><span>首层</span><span>未使用的柱边线</span></div>
                        <div class="list-row"><span>柱边线12</span><span>首层</span><span>未使用的柱边线</span></div>
                        <div class="list-row"><span>柱边线13</span><span>首层</span><span>未使用的柱边线</span></div>
                    </div>
                    <div class="vscroll">
                        <span class="arrow-up"></span>
                        <span class="vthumb"><i></i></span>
                        <span class="arrow-down"></span>
                    </div>
                    <div class="hscroll">
                        <span class="arrow-left"></span>
                        <span class="hthumb"><i></i></span>
                        <span class="arrow-right"></span>
                    </div>
                </div>
                <div class="tips">温馨提示:<br>如果柱图元无名或柱图元有名但与已有同名柱构件尺寸不匹配，图元以红色显示。<br>1、有名柱图元（尺寸标识或实长与同名构件尺寸不匹配），按同名柱构件匹配;<br>需检查其匹配构件是否正确，如果不正确，手动反建构件或替换构件名称。<br>2、无名柱图元，匹配标准柱或反建构件，需检查其匹配构件是否正确，如果不<br>正确，手动反建构件或替换构件名称。</div>
            </div>
            <div class="dlg-side">
                <div class="opt opt-first"><span class="radio radio-on"></span>按边线校核</div>
                <div class="opt"><span class="radio"></span>按填充校核</div>
                <div class="side-label">校核内容</div>
                <div class="chk"><span class="box"><svg viewBox="0 0 12 12"><use href="#i-check"/></svg></span>无名称标识</div>
                <div class="chk"><span class="box"><svg viewBox="0 0 12 12"><use href="#i-check"/></svg></span>有名称标识，</div>
                <div class="chk-more">但尺寸匹配错误</div>
                <div class="chk"><span class="box"><svg viewBox="0 0 12 12"><use href="#i-check"/></svg></span>未识别的柱图元</div>
                <button class="refresh" type="button">刷新</button>
            </div>
        </div>
    </section>
</body>
</html>
```

FILE: styles.css
```css
:root {
    --panel: #f0f0f0;
    --bar: #f1f1f3;
    --group: #f8f8f8;
    --line: #a0a0a0;
    --text: #111;
    --cjk: "Noto Sans CJK SC", "Noto Sans", sans-serif;
}

* {
    margin: 0;
    padding: 0;
    box-sizing: border-box;
}

html, body {
    width: 1324px;
    height: 604px;
    overflow: hidden;
}

body {
    font-family: var(--cjk);
    font-size: 12px;
    color: var(--text);
    background: #000;
}

.sprite {
    display: none;
}

.app {
    display: flex;
    width: 1324px;
    height: 604px;
}

.ic {
    flex: none;
    width: 16px;
    height: 16px;
}

/* left dock */
.nav-panel {
    flex: none;
    width: 155px;
    height: 604px;
    display: flex;
    flex-direction: column;
    background: #ececec;
}

.dock-title {
    flex: none;
    height: 13px;
    display: flex;
    align-items: center;
    gap: 8px;
    font-size: 13px;
    line-height: 13px;
    padding-right: 6px;
    background: #f0f0f0;
    color: #333;
    overflow: hidden;
}

.dock-title span {
    flex: 1;
    margin-top: -3px;
}

.dock-title-active {
    background: #0a6be8;
    color: #fff;
}

.dock-ic {
    flex: none;
    width: 10px;
    height: 10px;
}

.nav-btn {
    flex: none;
    height: 21px;
    margin: 1px 3px 2px 0;
    text-align: center;
    line-height: 21px;
    background: linear-gradient(#f6f6f6, #e4e4e4);
    border-bottom: 1px solid #c4c4c4;
}

.tree-tools {
    flex: none;
    height: 26px;
    padding: 6px 0 0;
    background: #f1f1f1;
}

.expand-ic {
    display: block;
    width: 34px;
    height: 13px;
}

.tree {
    flex: 1;
    list-style: none;
    margin-right: 3px;
    background: #fff;
    border-right: 1px solid #666;
    border-top: 1px solid #888;
    overflow: hidden;
}

.node, .leaf {
    height: 16px;
    display: flex;
    align-items: center;
    gap: 3px;
    white-space: nowrap;
    position: relative;
}

.node {
    padding-left: 14px;
    gap: 5px;
}

.leaf {
    padding-left: 34px;
}

.leaf::before {
    content: "";
    position: absolute;
    left: 23px;
    top: 0;
    width: 10px;
    height: 8px;
    border-left: 1px dotted #777;
    border-bottom: 1px dotted #777;
}

.folder {
    flex: none;
    width: 16px;
    height: 14px;
}

.tw {
    position: absolute;
    left: 2px;
    top: 4px;
    width: 0;
    height: 0;
    border-left: 5px solid #fff;
    border-top: 4px solid transparent;
    border-bottom: 4px solid transparent;
    filter: drop-shadow(0 0 .6px #555);
}

.tw-open {
    top: 6px;
    border: 0;
    border-right: 6px solid #333;
    border-top: 6px solid transparent;
    filter: none;
}

.nav-foot {
    flex: none;
    height: 14px;
    padding-left: 40px;
    margin-right: 3px;
    line-height: 16px;
    background: linear-gradient(#f4f4f4, #e6e6e6);
    border-top: 1px solid #bbb;
}

/* drawing dock */
.drawing-panel {
    flex: none;
    width: 182px;
    height: 604px;
    display: flex;
    flex-direction: column;
    background: #eee;
}

.drawing-panel .dock-title {
    padding-left: 3px;
    padding-right: 9px;
}

.tab-strip {
    flex: none;
    height: 21px;
    margin: 1px 5px 0 3px;
    display: flex;
    justify-content: space-between;
}

.tab {
    width: 100px;
    height: 21px;
    padding-left: 7px;
    font-size: 12px;
    line-height: 20px;
    background: #fff;
    border: 1px solid #aaa;
    border-bottom: 0;
    position: relative;
    z-index: 1;
}

.tab-arrows {
    display: flex;
    gap: 1px;
    margin-top: 1px;
}

.tab-arrow {
    width: 15px;
    height: 16px;
    font-size: 9px;
    line-height: 15px;
    text-align: center;
    color: #5a7aa8;
    background: linear-gradient(#f6f6f6, #dedfe3);
    border: 1px solid #bbb;
}

.tab-body {
    flex: 1;
    margin: -1px 5px 0 3px;
    padding: 4px 2px 0 5px;
    display: flex;
    flex-direction: column;
    border: 1px solid #aaa;
    border-bottom: 0;
    background: #fff;
}

.sheet-tools {
    flex: none;
    height: 23px;
    display: flex;
    gap: 1px;
    border-bottom: 1px solid #bbb;
    background: #f2f2f2;
}

.sheet-btn {
    padding: 0 2px;
    height: 22px;
    line-height: 22px;
    background: #efefef;
    border: 1px solid #c8c8c8;
    border-width: 1px 1px 0 0;
    color: #333;
}

.sheet-btn:first-child {
    width: 69px;
    text-align: center;
}

.sheet-btn:nth-child(2) {
    width: 57px;
    text-align: center;
}

.sheet-more {
    margin-left: auto;
    width: 12px;
    font-size: 12px;
    font-weight: 700;
    line-height: 14px;
    text-align: center;
    background: #f3f3f3;
    border-left: 1px solid #bbb;
}

.sheet {
    flex: 1;
    display: flex;
    margin-top: 2px;
    border: 1px solid #aaa;
    border-bottom: 0;
    overflow: hidden;
}

.sheet-grid {
    flex: none;
    width: 147px;
    overflow: hidden;
}

.row {
    display: grid;
    grid-template-columns: 31px 102px 14px;
    height: 19.330px;
    line-height: 19px;
    white-space: nowrap;
    border-bottom: 1px solid #d8d8d8;
}

.row > span {
    overflow: hidden;
    border-right: 1px solid #d8d8d8;
}

.row-head {
    height: 26px;
    line-height: 25px;
}

.num {
    text-align: center;
    background: #f3f3f3;
}

.name {
    text-align: center;
    color: #5a0a78;
    background: linear-gradient(#fbdfa8, #f2c47e);
}

.cell {
    padding-left: 3px;
}

.cell i {
    font-style: normal;
    color: #888;
}

.row-on .num {
    color: #5a0a78;
    background: #fad9a0;
}

.row > .row-cell-on,
.row-on > .cell {
    position: relative;
    overflow: visible;
    background: #0a7a0a;
    outline: 3px solid #777;
    outline-offset: -2px;
    line-height: 19px;
}

.row-on > .cell::after {
    content: "";
    position: absolute;
    right: -3px;
    bottom: -3px;
    width: 5px;
    height: 5px;
    background: #777;
    border: 1px solid #fff;
}

.row-on .extra {
    background: #0a7a0a;
}

.sheet-scroll {
    flex: none;
    width: 15px;
    display: flex;
    flex-direction: column;
    align-items: center;
    background: #f3f3f3;
}

.sheet-up {
    height: 20px;
    font-size: 10px;
    line-height: 18px;
    color: #555;
}

.sheet-thumb {
    width: 14px;
    height: 41px;
    line-height: 40px;
    text-align: center;
    color: #666;
    background: linear-gradient(90deg, #f2f2f2, #c8c8c8);
    border: 1px solid #bbb;
    border-radius: 2px;
}

/* toolbars */
.work {
    flex: 1;
    min-width: 0;
    display: flex;
    flex-direction: column;
}

.toolbars {
    flex: none;
    height: 108px;
    background: var(--bar);
    white-space: nowrap;
}

.bar {
    display: flex;
    gap: 3px;
    padding-left: 4px;
}

.bar-1 {
    height: 22px;
}

.bar-2 {
    height: 29px;
    padding-top: 3px;
    padding-bottom: 1px;
}

.bar-3 {
    height: 26px;
    margin-top: 3px;
}

.bar-4 {
    height: 26px;
    margin-top: 1px;
}

.grp {
    position: relative;
    display: flex;
    align-items: center;
    gap: 8px;
    background: var(--group);
    border-radius: 3px;
}

.grp::before {
    content: "";
    position: absolute;
    left: 1px;
    top: 5px;
    bottom: 5px;
    width: 2px;
    background: repeating-linear-gradient(#aaa 0 2px, transparent 2px 4px);
}

.grp-plain {
    padding: 0 6px 0 7px;
    gap: 7.500px;
}

.grp-plain .sep {
    margin: 0 -1.500px;
}

.grp-a {
    width: 562px;
    padding-left: 5px;
    gap: 4px;
}

.grp-a > .tool {
    margin-left: 2.500px;
}

.grp-a > .tool:first-of-type {
    margin-left: 2px;
}

.grp-axis {
    padding-left: 10px;
    gap: 7px;
    flex: 1;
}

.grp-pick {
    width: 258px;
    padding-left: 6px;
}

.grp-cad {
    width: 710px;
    padding-left: 11px;
}

.grp-sym {
    width: 162px;
    padding-left: 7px;
    gap: 7px;
}

.grp-col {
    width: 525px;
    padding-left: 10px;
    gap: 7.500px;
}

.grp-layer {
    flex: 1;
    padding-left: 6px;
    gap: 6px;
}

.tool {
    display: inline-flex;
    align-items: center;
    gap: 4px;
    height: 22px;
    color: #222;
}

.tool-off {
    color: #a8a8a8;
}

.tool-on {
    background: #e4f1fd;
    border: 1px solid #5ba4e6;
}

.tool-point {
    width: 40px;
    height: 24px;
    padding-left: 3px;
    gap: 5px;
    margin: 0 -5px 0 -1px;
}

.tool-layer {
    width: 76px;
    height: 24px;
    padding-left: 3px;
}

.tool-pic {
    margin-left: 2px;
}

.sep {
    flex: none;
    width: 1px;
    height: 16px;
    margin: 0 -2px;
    background: #bdbdbd;
}

.sep-c {
    margin: 0 2px;
}

.caret {
    width: 0;
    height: 0;
    margin-left: 2px;
    border-top: 3px solid #222;
    border-left: 3px solid transparent;
    border-right: 3px solid transparent;
}

.caret-near {
    margin-left: -1px;
    border-left-width: 2.500px;
    border-right-width: 2.500px;
}

.combo {
    position: relative;
    width: 68px;
    height: 23px;
    padding-left: 2px;
    line-height: 23px;
    background: linear-gradient(90deg, #fff 0, #fff 80%, #f3f3f3 80%);
}

.combo-s {
    width: 56px;
}

.combo-kz {
    width: 69px;
    letter-spacing: 1px;
}

.combo::after {
    content: "";
    position: absolute;
    right: 3px;
    top: 10px;
    border-top: 3px solid #222;
    border-left: 3px solid transparent;
    border-right: 3px solid transparent;
}

.cad-ic {
    flex: none;
    width: 16px;
    height: 14px;
    font-family: "Liberation Sans", sans-serif;
    font-size: 7px;
    font-weight: 700;
    line-height: 12px;
    text-align: center;
    color: #1d4f96;
    background: #dcebfa;
    border: 1px solid #2d6fb8;
}

.cad-ic-off {
    color: #6a8fc0;
    background: #fff;
}

.ic-text {
    font: 700 6px "Liberation Sans", sans-serif;
    fill: #123f86;
}

.ic-phi {
    font: 13px "DejaVu Sans", sans-serif;
    fill: #333;
}

.ic-a {
    font: italic 700 9px "Liberation Sans", sans-serif;
    fill: #1d5aa0;
}

.ic-z {
    font: 700 11px "Liberation Sans", sans-serif;
    fill: #c22;
}

/* drawing area */
.canvas {
    flex: none;
    display: block;
    width: 987px;
    height: 496px;
    background: #000;
}

.canvas path {
    shape-rendering: crispEdges;
}

.solid { fill: #7f00ff; }
.gl { stroke: #00f000; fill: none; stroke-width: 1; }
.gl-fat { stroke: #00e000; stroke-width: 2; }
.dgl { stroke: #107a10; stroke-width: 1; }
.dg { stroke: #0f7a0f; fill: none; }
.axis { stroke: #0f7a0f; fill: none; stroke-width: 1; }
.yl { stroke: #ffe600; fill: none; stroke-width: 1; }
.yl-fat { stroke: #ffe600; fill: none; stroke-width: 2; }
.bd { stroke: #1010e0; fill: none; stroke-width: 1; stroke-dasharray: 2 2; }
.dr { stroke: #8a0a0a; fill: none; stroke-width: 1; }
.rd { stroke: #ff0000; fill: none; stroke-width: 1; }
.rd-v { stroke: #e00000; fill: none; stroke-width: 1; }

.ct {
    font: 9px "DejaVu Sans Mono", monospace;
    fill: #00f000;
}

.ct-big {
    font-size: 11px;
}

.bl {
    font: 9px "DejaVu Sans Mono", monospace;
    fill: #0c5cf5;
}

.big {
    font: 300 20px Roboto, sans-serif;
    fill: #fff;
}

.wt {
    font: 300 18px Roboto, sans-serif;
    fill: #fff;
}

/* check dialog */
.dialog {
    position: absolute;
    left: 30px;
    top: 211px;
    width: 624px;
    height: 380px;
    display: flex;
    flex-direction: column;
    padding: 0 5px 6px 6px;
    border: 1px solid rgba(60, 60, 60, .8);
    border-radius: 7px;
    background: rgba(255, 255, 255, .1);
    backdrop-filter: blur(6px);
    box-shadow: 0 0 6px rgba(0, 0, 0, .5);
}

.dlg-title {
    flex: none;
    height: 27px;
    display: flex;
    justify-content: space-between;
    padding-left: 1px;
    color: #111;
    line-height: 26px;
}

.dlg-close {
    width: 47px;
    height: 19px;
    display: flex;
    align-items: center;
    justify-content: center;
    border: 1px solid rgba(255, 255, 255, .35);
    border-top: 0;
    border-radius: 0 0 4px 4px;
}

.dlg-close svg {
    width: 10px;
    height: 10px;
}

.dlg-body {
    flex: 1;
    min-height: 0;
    display: flex;
    border: 1px solid #6e6e6e;
    background: var(--panel);
}

.dlg-main {
    flex: 1;
    min-width: 0;
    display: flex;
    flex-direction: column;
    border-right: 1px solid var(--line);
}

.list-wrap {
    flex: none;
    height: 251px;
    display: grid;
    grid-template-columns: 471px 17px;
    grid-template-rows: 234px 17px;
    background: #fff;
    border-bottom: 1px solid var(--line);
}

.list {
    padding-top: 7px;
    overflow: hidden;
}

.list-head, .list-row {
    display: grid;
    grid-template-columns: 125px 65px 1fr;
    padding-left: 8px;
}

.list-head {
    height: 19px;
    line-height: 18px;
    color: #333;
    background: linear-gradient(#fff, #f0f1f3);
    border-bottom: 1px solid #d5d5d5;
}

.list-head span + span {
    border-left: 1px solid #e2e2e2;
    padding-left: 6px;
    margin-left: -7px;
}

.list-row {
    height: 17px;
    line-height: 17px;
}

.list-row-on {
    margin-left: 2px;
    padding-left: 5px;
    background: linear-gradient(#e6f0fc, #cfe2f8);
    border: 1px solid #8fb2dc;
    border-width: 1px 0 1px 1px;
    border-radius: 2px 0 0 2px;
    line-height: 15px;
}

.vscroll {
    display: flex;
    flex-direction: column;
    grid-row: 1 / 3;
    grid-column: 2;
    align-items: center;
    background: var(--panel);
}

.arrow-up, .arrow-down {
    flex: none;
    width: 0;
    height: 0;
    border-left: 4px solid transparent;
    border-right: 4px solid transparent;
}

.arrow-up {
    margin: 10px 0 21px;
    border-bottom: 4px solid #444;
}

.arrow-down {
    margin-top: 9px;
    border-top: 4px solid #444;
}

.vthumb {
    flex: none;
    width: 15px;
    height: 179px;
    display: flex;
    align-items: center;
    justify-content: center;
    background: linear-gradient(90deg, #f2f2f2, #c4c4c4);
    border: 1px solid #a2a2a2;
    border-radius: 2px;
}

.vthumb i {
    width: 7px;
    height: 7px;
    background: repeating-linear-gradient(#666 0 1px, transparent 1px 3px);
}

.hscroll {
    display: flex;
    align-items: center;
    background: var(--panel);
}

.arrow-left, .arrow-right {
    flex: none;
    width: 0;
    height: 0;
    border-top: 4px solid transparent;
    border-bottom: 4px solid transparent;
}

.arrow-left {
    margin: 0 6px 0 8px;
    border-right: 4px solid #444;
}

.arrow-right {
    margin-left: 25px;
    border-left: 4px solid #444;
}

.hthumb {
    flex: none;
    width: 413px;
    height: 15px;
    display: flex;
    align-items: center;
    justify-content: center;
    background: linear-gradient(#f2f2f2, #c4c4c4);
    border: 1px solid #a2a2a2;
    border-radius: 2px;
}

.hthumb i {
    width: 7px;
    height: 7px;
    background: repeating-linear-gradient(90deg, #666 0 1px, transparent 1px 3px);
}

.tips {
    flex: 1;
    padding: 3px 0 0 1px;
    line-height: 13px;
    white-space: nowrap;
    color: #111;
}

.dlg-side {
    flex: none;
    width: 120px;
    padding-left: 7px;
    position: relative;
}

.opt, .chk {
    display: flex;
    align-items: center;
    gap: 3px;
    height: 17px;
    white-space: nowrap;
}

.opt {
    margin-bottom: 6px;
}

.opt-first {
    margin-top: 40px;
}

.radio {
    flex: none;
    width: 12px;
    height: 12px;
    border-radius: 50%;
    border: 1px solid #8a8a8a;
    background: radial-gradient(circle, #f8f8f8, #d0d0d0);
}

.radio-on {
    background: radial-gradient(circle at 50% 55%, #1f8fd0 0, #0a6aa8 32%, #f2f2f2 40%, #d8d8d8 100%);
}

.side-label {
    margin-top: 26px;
    margin-bottom: 13px;
    height: 17px;
    line-height: 17px;
}

.chk {
    margin-bottom: 6px;
    height: 17px;
}

.box {
    flex: none;
    width: 13px;
    height: 13px;
    border: 1px solid #8a8a8a;
    background: linear-gradient(135deg, #dfe3ea, #f6f7f9);
}

.box svg {
    display: block;
    width: 11px;
    height: 11px;
}

.chk-more {
    height: 17px;
    margin: -1px 0 4px 20px;
    line-height: 17px;
    white-space: nowrap;
}

.refresh {
    position: absolute;
    left: 34px;
    top: 270px;
    width: 60px;
    height: 25px;
    font: 12px var(--cjk);
    color: #111;
    background: linear-gradient(#f4f4f4 50%, #dcdcdc 50%);
    border: 1px solid #8a8a8a;
    border-radius: 3px;
}
```
